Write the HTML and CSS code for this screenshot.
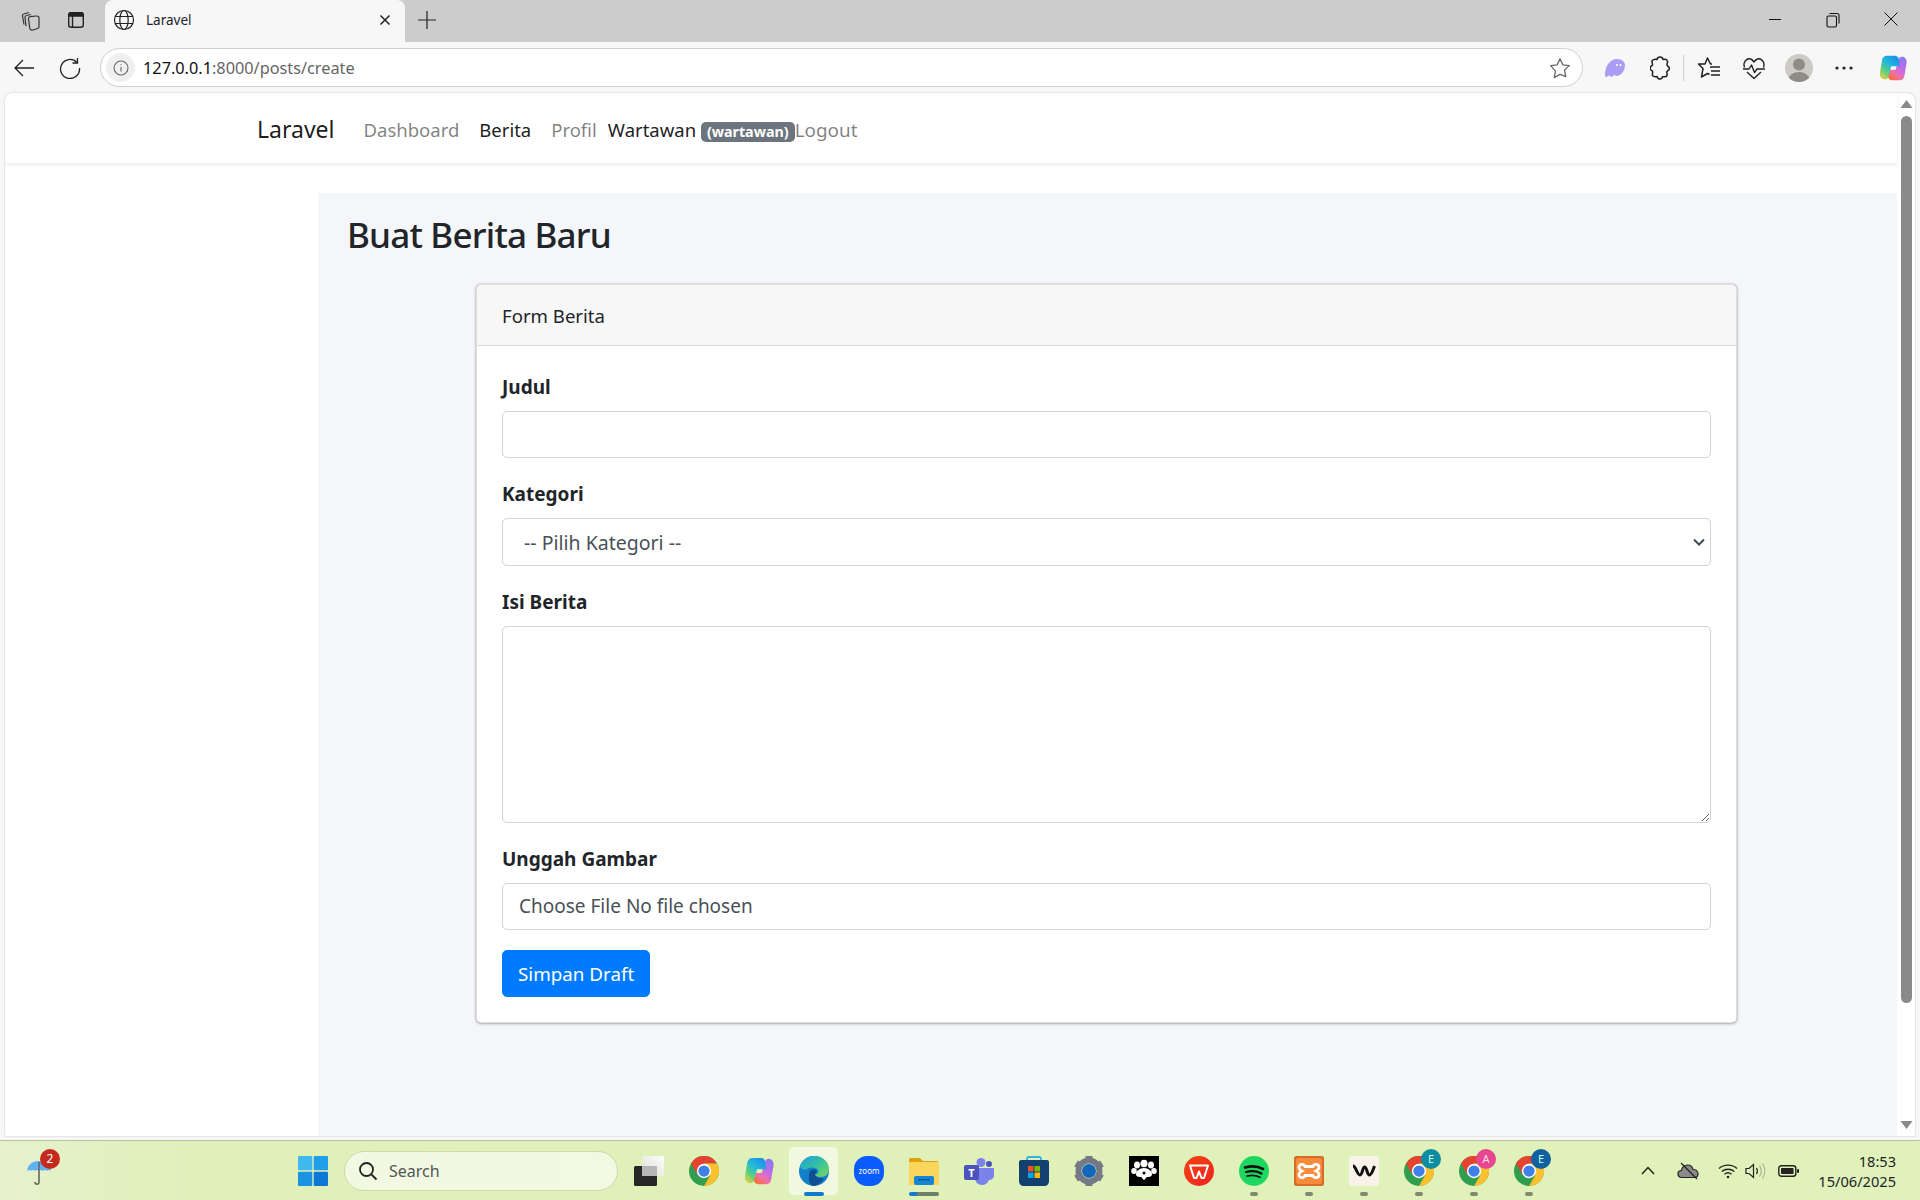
FILE: index.html
```html
<!DOCTYPE html>
<html>
<head>
<title>Laravel</title>
<link rel="stylesheet" href="styles.css">
</head>
<body>

<svg class="defs" width="0" height="0">
  <defs>
    <symbol id="chrome" viewBox="0 0 48 48">
      <circle cx="24" cy="24" r="24" fill="#2f9e4f"/>
      <path d="M3.2 12A24 24 0 0 1 44.8 12H24L13.6 30Z" fill="#e5432f"/>
      <path d="M44.8 12A24 24 0 0 1 24 48L34.4 30 24 12Z" fill="#fbc02d"/>
      <circle cx="24" cy="24" r="11.5" fill="#fff"/>
      <circle cx="24" cy="24" r="9" fill="#3f7fe8"/>
    </symbol>
    <linearGradient id="cp-a" x1=".8" y1="0" x2=".1" y2="1">
      <stop offset="0" stop-color="#1d8fe8"/><stop offset=".4" stop-color="#22b8dc"/><stop offset=".7" stop-color="#5fd07a"/><stop offset="1" stop-color="#f3d040"/>
    </linearGradient>
    <linearGradient id="cp-b" x1=".9" y1="0" x2=".3" y2="1">
      <stop offset="0" stop-color="#7f7cf0"/><stop offset=".45" stop-color="#c46be8"/><stop offset=".75" stop-color="#f06fa8"/><stop offset="1" stop-color="#f7703a"/>
    </linearGradient>
    <symbol id="copilot" viewBox="0 0 32 32">
      <path d="M24 30h-9c-2.500 0-4-1.500-4.500-3.500L9 18h10l3-11c.5-2 2-4 4.500-4 3 0 5.500 3 5 7L29 25c-.6 3-2.500 5-5 5Z" fill="url(#cp-b)"/>
      <path d="M9 2h9c2.500 0 4 1.500 4.500 3.500L24 14H14l-3 11c-.5 2-2 4-4.500 4C3 29 .5 26 1 22L3.500 7C4 4 6 2 9 2Z" fill="url(#cp-a)"/>
    </symbol>
  </defs>
</svg>

<div class="tabstrip">
  <span class="strip-btn">
    <svg width="22" height="22" viewBox="0 0 22 22" fill="none" stroke="#333" stroke-width="1.200"><path d="M4 15.500 2.500 7c-.2-1 .3-1.800 1.300-2L9 3.500M6 17 5 8.500c-.1-1 .4-1.800 1.400-2L11 5.500"/><path d="M8.500 9.500c0-1 .7-1.700 1.700-1.800l6.300-.7c1.500-.1 2.500.7 2.500 2v8.500c0 1-.5 1.700-1.500 2L13 21c-2 .4-3-.3-3.300-2Z"/></svg>
  </span>
  <span class="strip-btn">
    <svg width="20" height="20" viewBox="0 0 20 20" fill="none" stroke="#222" stroke-width="1.400"><rect x="2.700" y="2.700" width="14.600" height="14.600" rx="2.500"/><path d="M3 4.500c0-1 .8-1.700 1.700-1.700h10.600c1 0 1.700.8 1.700 1.700V6H3Z" fill="#222"/><path d="M6.500 6v11"/></svg>
  </span>
  <div class="tab">
    <svg width="22" height="22" viewBox="0 0 22 22" fill="none" stroke="#222" stroke-width="1.200"><circle cx="11" cy="11" r="9.500"/><ellipse cx="11" cy="11" rx="4.200" ry="9.500"/><path d="M2.200 7.500h17.600M2.200 14.500h17.600"/></svg>
    <span class="tab-title">Laravel</span>
    <svg class="tab-close" width="12" height="12" viewBox="0 0 12 12" stroke="#222" stroke-width="1.500"><path d="M1.500 1.500l9 9M10.500 1.500l-9 9"/></svg>
  </div>
  <span class="new-tab">
    <svg width="18" height="18" viewBox="0 0 18 18" stroke="#222" stroke-width="1.200"><path d="M9 0v18M0 9h18"/></svg>
  </span>
  <div class="window-controls">
    <span class="win-btn"><svg width="14" height="14" viewBox="0 0 14 14" stroke="#111" stroke-width="1"><path d="M1 7.500h12"/></svg></span>
    <span class="win-btn"><svg width="14" height="16" viewBox="0 0 14 16" fill="none" stroke="#111" stroke-width="1.100"><rect x="1" y="4" width="9.500" height="11" rx="1.500"/><path d="M3.500 1.500h7.500c1 0 2 1 2 2v8"/></svg></span>
    <span class="win-btn"><svg width="14" height="14" viewBox="0 0 14 14" stroke="#111" stroke-width="1"><path d="M.5.500l13 13M13.500.500l-13 13"/></svg></span>
  </div>
</div>

<div class="toolbar">
  <span class="tool-btn">
    <svg width="22" height="20" viewBox="0 0 22 20" fill="none" stroke="#222" stroke-width="1.300"><path d="M21 10H2M10 2l-8 8 8 8"/></svg>
  </span>
  <span class="tool-btn">
    <svg width="22" height="22" viewBox="0 0 22 22" fill="none" stroke="#222" stroke-width="1.300"><path d="M18 5.500A9.500 9.500 0 1 0 20.500 11"/><path d="M18.500 1v5h-5"/></svg>
  </span>
  <div class="address">
    <span class="site-info">
      <svg width="16" height="16" viewBox="0 0 16 16" fill="none" stroke="#666" stroke-width="1.100"><circle cx="8" cy="8" r="7"/><path d="M8 7v4.500M8 4.200v1.100"/></svg>
    </span>
    <span class="url"><span class="url-host">127.0.0.1</span>:8000/posts/create</span>
    <svg class="fav-star" width="22" height="22" viewBox="0 0 22 22" fill="none" stroke="#666" stroke-width="1.300" stroke-linejoin="round"><path d="M11 1.800l2.800 6 6.500.8-4.800 4.500 1.300 6.500L11 17.400l-5.800 3.200 1.300-6.500L1.700 8.600l6.500-.8Z"/></svg>
  </div>
  <div class="tool-icons">
    <span class="tool-btn"><svg width="22" height="20" viewBox="0 0 22 20"><path d="M1 17c0-9 5-16 12-16 5 0 8 3 8 6 0 5-3 10-8 11-1 .2-1.500-1-2.500-1-1 0-1.500 2-3 2-1 0-1-1.500-2-1.500S3 19 2 19c-.7 0-1-1-1-2Z" fill="#ab9df6"/><circle cx="13" cy="7" r="1" fill="#fff"/><circle cx="16.500" cy="7" r="1" fill="#fff"/></svg></span>
    <span class="tool-btn"><svg width="20" height="24" viewBox="0 0 20 24" fill="none" stroke="#222" stroke-width="1.500" stroke-linejoin="round"><path d="M7 3.500C7.300 1.800 8.500 1 10 1s2.800 1 3 2.500c2-.5 4 .2 4.500 1.700.4 1.300-.7 2.600-.5 3.800.3 1 1 1 1.800 2 .7 1 .7 2.400-.3 3.200-.7.600-1.500.8-1.700 1.800-.2 1 .8 2.500.2 3.700-.6 1.200-2.500 1.300-4.500 1-.3 1.300-1.200 2.300-2.500 2.300S7.300 21.800 7 20.500c-2 .3-3.900.2-4.500-1-.6-1.200.4-2.700.2-3.700-.2-1-1-1.200-1.700-1.800-1-.8-1-2.200-.3-3.200.8-1 1.500-1 1.800-2 .2-1.200-.9-2.500-.5-3.800C2.900 3.700 5 3 7 3.500Z"/></svg></span>
    <span class="tool-sep"></span>
    <span class="tool-btn"><svg width="24" height="24" viewBox="0 0 24 24" fill="none" stroke="#222" stroke-width="1.500" stroke-linejoin="round"><path d="M15 8h-1.500L10.500 2 8 8H1.500L6 12.500 4.500 21l6-3.500 2 1"/><path d="M13 11h10M14 15h9M14 19h9"/></svg></span>
    <span class="tool-btn"><svg width="24" height="24" viewBox="0 0 24 24" fill="none" stroke="#222" stroke-width="1.400" stroke-linejoin="round"><path d="M2.500 11.500C.5 6 5 2 8.500 3c1.500.4 2.500 1.500 3.500 3 1-1.500 2-2.600 3.500-3 3.500-1 8 3 6 8.500"/><path d="M5 16l7 6.500 7-6.500"/><path d="M1 13h6l2.500-4 3 7.500 2.500-3.500h8"/></svg></span>
    <span class="tool-btn"><svg width="28" height="28" viewBox="0 0 28 28"><defs><clipPath id="avatar-clip"><circle cx="14" cy="14" r="14"/></clipPath></defs><circle cx="14" cy="14" r="14" fill="#cdcbc6"/><g clip-path="url(#avatar-clip)" fill="#8f8c87"><circle cx="14" cy="10.500" r="6"/><ellipse cx="14" cy="26" rx="10.500" ry="8"/></g></svg></span>
    <span class="tool-btn"><svg width="18" height="4" viewBox="0 0 18 4" fill="#222"><circle cx="2" cy="2" r="1.600"/><circle cx="9" cy="2" r="1.600"/><circle cx="16" cy="2" r="1.600"/></svg></span>
    <span class="tool-btn copilot-btn"><svg width="28" height="28"><use href="#copilot"/></svg></span>
  </div>
</div>

<div class="viewport">
  <div class="page">
    <nav class="navbar">
      <a class="brand">Laravel</a>
      <a class="nav-link">Dashboard</a>
      <a class="nav-link active">Berita</a>
      <a class="nav-link">Profil</a>
      <span class="nav-user">Wartawan <span class="badge">(wartawan)</span></span><a class="logout">Logout</a>
    </nav>
    <main class="content">
      <h1>Buat Berita Baru</h1>
      <div class="card">
        <div class="card-header">Form Berita</div>
        <form class="card-body">
          <div class="form-group">
            <label>Judul</label>
            <input class="form-control" type="text">
          </div>
          <div class="form-group">
            <label>Kategori</label>
            <select class="form-control pick"><option>-- Pilih Kategori --</option></select>
          </div>
          <div class="form-group">
            <label>Isi Berita</label>
            <textarea class="form-control area"></textarea>
          </div>
          <div class="form-group">
            <label>Unggah Gambar</label>
            <input class="form-control file" type="file">
          </div>
          <button class="btn-primary" type="button">Simpan Draft</button>
        </form>
      </div>
    </main>
  </div>
  <div class="scrollbar">
    <svg width="13" height="10" viewBox="0 0 13 10" fill="#8a8a8a"><path d="M6.500 1 12.500 9H.5Z"/></svg>
    <div class="thumb"></div>
    <svg width="13" height="10" viewBox="0 0 13 10" fill="#8a8a8a"><path d="M6.500 9 12.500 1H.5Z"/></svg>
  </div>
</div>

<footer class="taskbar">
  <div class="weather">
    <svg width="28" height="30" viewBox="0 0 28 30"><path d="M2 15C3 8 8 5 14 5s11 3 12 10c-2-1.500-3-1.500-4 0-1.500-1.500-3-1.500-4 0-1.500-1.500-3-1.500-4 0-1.500-1.500-3-1.500-4 0-1.500-1.500-3-1.500-4 0-1-1.500-2-1.500-4 0Z" fill="#60b0f4"/><path d="M14 6v20c0 3-4 3-4 0" fill="none" stroke="#666" stroke-width="1.600"/></svg>
    <span class="notify">2</span>
  </div>
  <span class="start">
    <svg width="30" height="30" viewBox="0 0 30 30"><rect x="0" y="0" width="14.300" height="14.300" rx="1" fill="#3fb8f0"/><rect x="15.700" y="0" width="14.300" height="14.300" rx="1" fill="#1f9fe8"/><rect x="0" y="15.700" width="14.300" height="14.300" rx="1" fill="#1a94e2"/><rect x="15.700" y="15.700" width="14.300" height="14.300" rx="1" fill="#0a78d4"/></svg>
  </span>
  <div class="search">
    <svg width="20" height="20" viewBox="0 0 20 20" fill="none" stroke="#222" stroke-width="1.800"><circle cx="8.500" cy="8.500" r="6.500"/><path d="M13.500 13.500l5 5"/></svg>
    <span>Search</span>
  </div>
  <div class="apps">
    <span class="app">
      <svg width="30" height="30" viewBox="0 0 30 30"><defs><linearGradient id="tv-g" x1="1" y1="0" x2="0" y2="1"><stop offset="0" stop-color="#fff" stop-opacity=".95"/><stop offset="1" stop-color="#ddd" stop-opacity=".8"/></linearGradient></defs><rect x="0" y="10" width="23" height="20" rx="1.500" fill="#262626"/><rect x="8" y="0" width="22" height="20" rx="1.500" fill="url(#tv-g)"/><rect x="8" y="10" width="15" height="10" fill="#b5b5b5"/></svg>
    </span>
    <span class="app"><svg width="30" height="30"><use href="#chrome"/></svg></span>
    <span class="app"><svg width="30" height="30"><use href="#copilot"/></svg></span>
    <span class="app current">
      <svg width="30" height="30" viewBox="0 0 30 30">
        <defs><linearGradient id="edge-g" x1="0" y1="0" x2="1" y2="1"><stop offset="0" stop-color="#1b9de2"/><stop offset=".5" stop-color="#35c1a0"/><stop offset="1" stop-color="#7fd655"/></linearGradient></defs>
        <circle cx="15" cy="15" r="15" fill="#1380cc"/>
        <path d="M1 10C3 4 9 0 15 0c9 0 15 6 15 13 0 5-4 8-8 8-3 0-6-1-6-3 3 0 4-2 3-4-2-3-8-3-11-1-3 1.500-6 0-7-3Z" fill="url(#edge-g)"/>
        <path d="M10 20c0-5 3-8 7-6 1.500 1 1 3-1 4 0 3 4 5 9 4-2 4-6 8-11 8-3 0-5-6-4-10Z" fill="#0f4f92"/>
      </svg>
      <i class="run-bar"></i>
    </span>
    <span class="app">
      <svg width="30" height="30" viewBox="0 0 30 30"><rect width="30" height="30" rx="13" fill="#0b5cff"/><text x="15" y="18" class="zoom-text">zoom</text></svg>
    </span>
    <span class="app">
      <svg width="30" height="28" viewBox="0 0 30 28"><path d="M0 3c0-1.500 1-2 2-2h9l3 3h14c1 0 2 1 2 2v4H0Z" fill="#e0a30e"/><rect y="5" width="30" height="23" fill="#fbd65c"/><rect x="5" y="19" width="20" height="9" rx="2" fill="#1486d6"/><rect x="9" y="22" width="12" height="1.400" fill="#0a4f8c"/></svg>
      <i class="run-wide"></i>
    </span>
    <span class="app">
      <svg width="30" height="28" viewBox="0 0 30 28"><circle cx="17" cy="5.500" r="4.500" fill="#7b83eb"/><circle cx="25" cy="7" r="3" fill="#4b53bc"/><path d="M11 11h18c1 0 1 .5 1 1v6c0 4-3 5-5 5-1 3-4 5-7 5-4 0-7-3-7-7Z" fill="#7b83eb"/><rect x="0" y="8" width="15" height="15" rx="2" fill="#4b53bc"/><text x="7.500" y="20" class="teams-text">T</text></svg>
    </span>
    <span class="app">
      <svg width="30" height="30" viewBox="0 0 30 30"><path d="M8 5V3c0-1.500 1-2 2-2h10c1 0 2 .5 2 2v2" fill="none" stroke="#2fb4e8" stroke-width="1.800"/><path d="M0 6c0-1 .8-2 2-2h26c1 0 2 1 2 2v19c0 3-2 5-5 5H5c-3 0-5-2-5-5Z" fill="#12406f"/><rect x="9" y="10" width="5.500" height="5.500" fill="#f25022"/><rect x="15.500" y="10" width="5.500" height="5.500" fill="#7fba00"/><rect x="9" y="16.500" width="5.500" height="5.500" fill="#00a4ef"/><rect x="15.500" y="16.500" width="5.500" height="5.500" fill="#ffb900"/></svg>
    </span>
    <span class="app">
      <svg width="30" height="30" viewBox="0 0 30 30"><circle cx="15" cy="15" r="10.500" fill="none" stroke="#737a86" stroke-width="6"/><path d="M15 0v6M15 24v6M2 7.500l5 3M23 19.500l5 3M2 22.500l5-3M23 10.500l5-3" stroke="#737a86" stroke-width="7"/><circle cx="15" cy="15" r="7" fill="#1466b8"/></svg>
    </span>
    <span class="app">
      <svg width="30" height="30" viewBox="0 0 30 30"><rect width="30" height="30" fill="#000"/><g fill="#fff"><ellipse cx="15" cy="7.500" rx="3.600" ry="3.800"/><ellipse cx="8" cy="9" rx="3" ry="3.400"/><ellipse cx="22" cy="9" rx="3" ry="3.400"/><ellipse cx="5" cy="15" rx="2.800" ry="3"/><ellipse cx="25" cy="15" rx="2.800" ry="3"/><path d="M15 12c4 0 8 3 8 6 0 3-3 3-5 3-1 0-2 3-3 3s-2-3-3-3c-2 0-5 0-5-3 0-3 4-6 8-6Z"/></g><circle cx="15" cy="17" r="1.500" fill="#000"/></svg>
    </span>
    <span class="app">
      <svg width="30" height="30" viewBox="0 0 30 30"><defs><linearGradient id="wps-g" x1="0" y1="0" x2="1" y2="1"><stop offset="0" stop-color="#f6420f"/><stop offset="1" stop-color="#ee2323"/></linearGradient></defs><circle cx="15" cy="15" r="15" fill="url(#wps-g)"/><path d="M6 9.500h18L20 22h-2.500L15 15.500 12.500 22H10Z" fill="none" stroke="#fff" stroke-width="2" stroke-linejoin="round"/></svg>
    </span>
    <span class="app">
      <svg width="30" height="30" viewBox="0 0 30 30" fill="none" stroke="#121212" stroke-linecap="round"><circle cx="15" cy="15" r="15" fill="#1ed760" stroke="none"/><path d="M6 11.500c6-1.700 13-1.300 18 1.500" stroke-width="2.600"/><path d="M7 16c5-1.300 11-.9 15.500 1.500" stroke-width="2.200"/><path d="M8 20c4-1 9-.8 13 1.200" stroke-width="1.800"/></svg>
      <i class="dot"></i>
    </span>
    <span class="app">
      <svg width="30" height="30" viewBox="0 0 30 30"><rect width="30" height="30" rx="2.500" fill="#d96a2a"/><path d="M2 4c0-1 1-2 2-2h22c1 0 2 1 2 2v22c0 1-1 2-2 2H4c-1 0-2-1-2-2Z" fill="#f58b3c"/><g fill="none" stroke="#fff" stroke-width="2.800"><path d="M15 10.500h-4c-1-3-5.500-3-6 .5-.3 2 1 3 3 4-2 1-3.300 2-3 4 .5 3.500 5 3.500 6 .5h8c1 3 5.500 3 6-.5.3-2-1-3-3-4 2-1 3.300-2 3-4-.5-3.500-5-3.500-6-.5Z"/></g></svg>
      <i class="dot"></i>
    </span>
    <span class="app">
      <svg width="30" height="30" viewBox="0 0 30 30"><rect width="30" height="30" rx="3" fill="#f8f2e9"/><path d="M4 10c3 0 4 9 7 9 2.500 0 2.500-8 4.500-8 2.500 0 2.500 8 5 8 2 0 3.500-5 5-9" fill="none" stroke="#111" stroke-width="3"/></svg>
      <i class="dot"></i>
    </span>
    <span class="app">
      <svg width="30" height="30"><use href="#chrome"/></svg>
      <span class="profile profile-teal">E</span>
      <i class="dot"></i>
    </span>
    <span class="app">
      <svg width="30" height="30"><use href="#chrome"/></svg>
      <span class="profile profile-pink">A</span>
      <i class="dot"></i>
    </span>
    <span class="app">
      <svg width="30" height="30"><use href="#chrome"/></svg>
      <span class="profile profile-blue">E</span>
      <i class="dot"></i>
    </span>
  </div>
  <div class="tray">
    <span class="tray-item"><svg width="14" height="9" viewBox="0 0 14 9" fill="none" stroke="#222" stroke-width="1.500"><path d="M1 8l6-6.500L13 8"/></svg></span>
    <span class="tray-item"><svg width="22" height="18" viewBox="0 0 22 18"><path d="M5 15.500C2 15.500 1 13.500 1 12c0-2 1.500-3.500 3.500-3.500C5 5 7.500 3 10.500 3c3 0 5 2 5.500 4.500 3 0 5 2 5 4.500 0 2-1.500 3.500-3.500 3.500Z" fill="#8b8b8b" stroke="#222" stroke-width="1.200"/><path d="M4 1l16 16" stroke="#222" stroke-width="1.300"/></svg></span>
    <span class="tray-item wifi"><svg width="20" height="16" viewBox="0 0 20 16" fill="none" stroke="#222" stroke-width="1.400"><path d="M1 5.500c5-4.500 13-4.500 18 0M3.800 8.500c3.500-3 9-3 12.500 0M6.500 11.300c2-1.700 5-1.700 7 0"/><circle cx="10" cy="14" r="1.300" fill="#222" stroke="none"/></svg></span>
    <span class="tray-item speaker"><svg width="21" height="18" viewBox="0 0 21 18" fill="none" stroke-width="1.200"><path d="M1 6.500h3L8.500 2.500v13L4 11.500H1Z" stroke="#222"/><path d="M11.500 6c1.200 2 1.200 4 0 6" stroke="#222"/><path d="M14.500 3.500c2.200 3.500 2.200 7.500 0 11M17.500 1.500c3 4.500 3 10.500 0 15" stroke="#a5b096"/></svg></span>
    <span class="tray-item battery"><svg width="21" height="12" viewBox="0 0 21 12"><rect x=".8" y=".8" width="17" height="10.400" rx="2.500" fill="none" stroke="#222" stroke-width="1.400"/><rect x="3" y="3" width="12.600" height="6" rx="1" fill="#222"/><rect x="19" y="4" width="2" height="4" rx="1" fill="#222"/></svg></span>
    <div class="clock"><span>18:53</span><span>15/06/2025</span></div>
  </div>
</footer>

</body>
</html>
```

FILE: styles.css
```css
/* Window frame */
html,
body {
  height: 100%;
  margin: 0;
}

body {
  background: #f7f7f7;
  color: #212529;
  display: flex;
  flex-direction: column;
  font-family: 'Noto Sans', sans-serif;
  height: 1200px;
  overflow: hidden;
}

.defs {
  display: block;
  height: 0;
}

svg {
  display: block;
}

.tabstrip {
  align-items: center;
  background: #cccccc;
  box-sizing: border-box;
  display: flex;
  flex: none;
  height: 42px;
  padding: 0 0 2px 8px;
}

.strip-btn {
  display: flex;
  justify-content: center;
  width: 45px;
}

.tab {
  align-items: center;
  align-self: stretch;
  background: #f7f7f7;
  border-radius: 8px 8px 0 0;
  box-sizing: border-box;
  display: flex;
  margin: 0 0 -2px 7px;
  padding: 0 14px 2px 8px;
  width: 300px;
}

.tab-title {
  flex: 1;
  font-size: 13.500px;
  margin-left: 11px;
}

.new-tab {
  display: flex;
  justify-content: center;
  width: 44px;
}

.window-controls {
  display: flex;
  margin-left: auto;
}

.win-btn {
  display: flex;
  justify-content: center;
  width: 58px;
}

.toolbar {
  align-items: center;
  display: flex;
  flex: none;
  height: 51px;
  padding-left: 1px;
}

.tool-btn {
  align-items: center;
  display: flex;
  justify-content: center;
  width: 45px;
}

.toolbar > .tool-btn {
  width: 46px;
}

.address {
  align-items: center;
  background: #fff;
  border: 1px solid #cfcfcf;
  border-radius: 20px;
  box-sizing: border-box;
  display: flex;
  height: 39px;
  margin-left: 7px;
  padding: 0 11px 0 5px;
  width: 1483px;
}

.site-info {
  align-items: center;
  background: #f0f0f0;
  border-radius: 50%;
  display: flex;
  height: 29px;
  justify-content: center;
  width: 29px;
}

.url {
  color: #666;
  flex: 1;
  font-size: 16.300px;
  margin-left: 8px;
}

.url-host {
  color: #111;
}

.tool-icons {
  align-items: center;
  display: flex;
  margin-left: 9px;
}

.tool-sep {
  background: #cfcfcf;
  height: 26px;
  margin: 0 2px 0 1px;
  width: 1px;
}

.copilot-btn {
  margin-left: 4px;
}

/* Page inside the browser */
.viewport {
  background: #fff;
  border-radius: 8px 8px 0 0;
  box-shadow: 0 0 2px rgba(0, 0, 0, .25);
  display: flex;
  flex: none;
  height: 1043px;
  margin: 0 5px;
  overflow: hidden;
}

.page {
  display: flex;
  flex: 1;
  flex-direction: column;
}

.navbar {
  align-items: center;
  background: #fff;
  box-shadow: 0 2px 4px rgba(0, 0, 0, .075);
  box-sizing: border-box;
  display: flex;
  flex: none;
  font-size: 18.500px;
  height: 70px;
  margin-bottom: 30px;
  padding-left: 252px;
}

.brand {
  color: rgba(0, 0, 0, .9);
  font-size: 23px;
  margin-right: 19px;
  padding-top: 2px;
}

.nav-link {
  color: rgba(0, 0, 0, .5);
  padding: 3px 10px 0;
}

.nav-link.active,
.nav-user {
  color: rgba(0, 0, 0, .9);
}

.nav-user {
  margin-left: 1px;
  padding-top: 3px;
}

.badge {
  background: #6c757d;
  border-radius: 5px;
  color: #fff;
  display: inline-block;
  font-size: 14.300px;
  font-weight: 700;
  line-height: 1;
  padding: 3px 6px;
}

.logout {
  color: rgba(0, 0, 0, .5);
  font-size: 18.900px;
  padding-top: 3px;
}

.content {
  background: #f4f6f9;
  box-sizing: border-box;
  flex: 1;
  margin-left: 313px;
  padding: 18px 160px 0 29px;
}

h1 {
  font-size: 35px;
  font-weight: 500;
  letter-spacing: -.8px;
  line-height: 48px;
  margin: 0 0 25px;
}

.card {
  background: #fff;
  border: 1px solid rgba(0, 0, 0, .125);
  border-radius: 5px;
  box-shadow: 0 0 2px rgba(0, 0, 0, .25), 0 1px 3px rgba(0, 0, 0, .25);
  margin-left: 129px;
}

.card-header {
  background: rgba(0, 0, 0, .03);
  border-bottom: 1px solid rgba(0, 0, 0, .125);
  font-size: 18.600px;
  line-height: 30px;
  padding: 16px 25px 14px;
}

.card-body {
  display: block;
  padding: 25px;
}

.form-group {
  margin-bottom: 20px;
}

label {
  display: block;
  font-size: 19px;
  font-weight: 700;
  line-height: 28px;
  margin-bottom: 10px;
  padding-top: 2px;
}

.form-control {
  background: #fff;
  border: 1px solid #ced4da;
  border-radius: 5px;
  box-sizing: border-box;
  color: #495057;
  display: block;
  font-family: inherit;
  font-size: 19px;
  height: 47px;
  padding: 7px 16px;
  width: 100%;
}

.pick {
  appearance: none;
  background: #fff url("data:image/svg+xml,<svg xmlns='http://www.w3.org/2000/svg' width='12' height='8' viewBox='0 0 12 8'><path d='M1 1.500l5 5 5-5' fill='none' stroke='%23414a55' stroke-width='2'/></svg>") no-repeat right 5px center;
  font-size: 19.500px;
  height: 48px;
  padding-left: 21px;
}

.area {
  height: 197px;
}

.file {
  padding-top: 9px;
}

.file::file-selector-button {
  background: none;
  border: 0;
  color: inherit;
  font: inherit;
  margin-right: 5px;
  padding: 0;
}

.btn-primary {
  background: #007bff;
  border: 1px solid #007bff;
  border-radius: 5px;
  color: #fff;
  display: block;
  font-family: inherit;
  font-size: 18.800px;
  height: 47px;
  padding: 0 15px;
}

.scrollbar {
  align-items: center;
  display: flex;
  flex: none;
  flex-direction: column;
  padding: 6px 0 6px;
  width: 18px;
}

.thumb {
  background: #8a8a8a;
  border-radius: 6px;
  flex: none;
  height: 887px;
  margin: 7px 0 auto;
  width: 11px;
}

/* Taskbar */
.taskbar {
  align-items: center;
  background: linear-gradient(90deg, #e6f1cb, #dff0b8 12%, #e0f1ba);
  border-top: 1px solid #b4c29f;
  box-sizing: border-box;
  display: flex;
  flex: none;
  height: 60px;
  margin-top: 4px;
}

.weather {
  display: flex;
  justify-content: center;
  margin-left: 9px;
  position: relative;
  width: 60px;
}

.notify {
  background: #c42b1c;
  border-radius: 50%;
  color: #fff;
  font-size: 12px;
  height: 20px;
  left: 31px;
  line-height: 20px;
  position: absolute;
  text-align: center;
  top: -7px;
  width: 20px;
}

.start {
  display: flex;
  justify-content: center;
  margin-left: 216px;
  width: 55px;
}

.search {
  align-items: center;
  background: rgba(255, 255, 255, .6);
  border: 1px solid #cdd9ad;
  border-radius: 20px;
  box-sizing: border-box;
  color: #555;
  display: flex;
  font-size: 16px;
  gap: 11px;
  height: 40px;
  margin-left: 4px;
  padding-left: 13px;
  width: 274px;
}

.apps {
  display: flex;
  margin-left: 3px;
}

.app {
  align-items: center;
  display: flex;
  height: 48px;
  justify-content: center;
  position: relative;
  width: 55px;
}

.app.current::before {
  background: rgba(255, 255, 255, .55);
  border-radius: 5px;
  content: "";
  inset: 0 3px;
  position: absolute;
}

.app svg {
  position: relative;
}

.run-bar,
.run-wide,
.dot {
  border-radius: 2px;
  bottom: -1px;
  height: 4px;
  left: 50%;
  position: absolute;
}

.run-bar {
  background: #0f7ad0;
  margin-left: -10px;
  width: 20px;
}

.run-wide {
  background: linear-gradient(90deg, #0f7ad0 8px, #6f7f67 8px);
  margin-left: -15px;
  width: 30px;
}

.dot {
  background: #7f8a70;
  margin-left: -4px;
  width: 8px;
}

.zoom-text {
  fill: #fff;
  font-family: 'Noto Sans', sans-serif;
  font-size: 8px;
  text-anchor: middle;
}

.teams-text {
  fill: #fff;
  font-family: 'Noto Sans', sans-serif;
  font-size: 11px;
  font-weight: 700;
  text-anchor: middle;
}

.profile {
  border-radius: 50%;
  color: #cfe;
  font-size: 11px;
  height: 20px;
  left: 30px;
  line-height: 20px;
  position: absolute;
  text-align: center;
  top: 2px;
  width: 20px;
}

.profile-teal {
  background: #0f8ca0;
}

.profile-pink {
  background: #e8478f;
  color: #fde;
}

.profile-blue {
  background: #11609f;
}

.tray {
  align-items: center;
  display: flex;
  margin-left: auto;
  padding-right: 24px;
}

.tray-item {
  display: flex;
  justify-content: center;
  width: 40px;
}

.wifi {
  margin-left: 5px;
  width: 30px;
}

.speaker {
  width: 24px;
}

.battery {
  width: 42px;
}

.clock {
  display: flex;
  flex-direction: column;
  font-size: 14.600px;
  line-height: 20px;
  text-align: right;
  width: 87px;
}
```
